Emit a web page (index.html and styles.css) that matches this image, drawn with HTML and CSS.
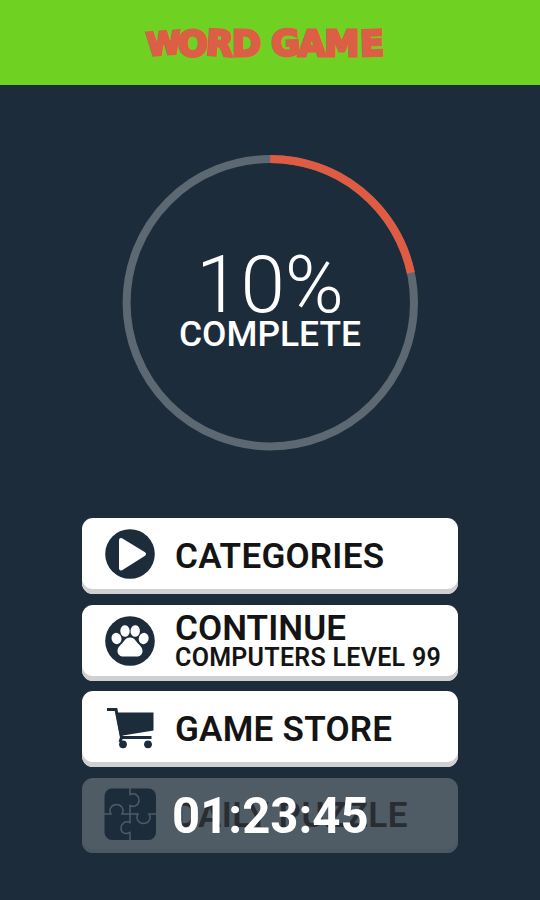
FILE: index.html
```html
<!DOCTYPE html>
<html lang="en">
  <head>
    <meta charset="UTF-8"/>
    <meta name="viewport" content="width=device-width, initial-scale=1.0">
    <link rel="stylesheet" href="styles.css">
    <title>Word Game</title>
  </head>
  <body>
    <header class="header">
      <svg class="logo" viewBox="0 0 250 50" role="img" aria-label="Word Game">
        <text y="39.500 40 38.500 40 40 40 39.500 40 40" x="2.500 33 60.500 87 120 127 153.500 179.500 215.500" rotate="-4 0 4 0 0 -3 0 0 -2"><tspan class="logo_w">W</tspan>ORD GAME</text>
      </svg>
    </header>
    <main class="main">
      <div class="progress">
        <svg class="progress_ring" viewBox="0 0 296 296">
          <circle class="progress_track" cx="148.300" cy="147.700" r="143.700"/>
          <circle class="progress_value" cx="148.300" cy="147.700" r="143.700" pathLength="360" transform="rotate(-90 148.300 147.700)"/>
        </svg>
        <div class="progress_text">
          <p class="progress_percent">10%</p>
          <p class="progress_label">COMPLETE</p>
        </div>
      </div>
      <nav class="menu">
        <button class="menuButton">
          <svg class="icon" viewBox="0 0 52 52">
            <circle cx="26" cy="26" r="24.8"/>
            <path class="icon_light" d="M17 12 L40 26 L17 40.500 Z"/>
          </svg>
          <span class="menuButton_title">CATEGORIES</span>
        </button>
        <button class="menuButton">
          <svg class="icon" viewBox="0 0 52 52">
            <circle cx="26" cy="26" r="24.8"/>
            <g class="icon_paw">
              <ellipse cx="12.500" cy="23.500" rx="4.900" ry="5.700" transform="rotate(-20 12.500 23.500)"/>
              <ellipse cx="21" cy="16" rx="4.700" ry="5.800" transform="rotate(-5 21 16)"/>
              <ellipse cx="31.200" cy="16" rx="4.700" ry="5.800" transform="rotate(5 31.200 16)"/>
              <ellipse cx="39.700" cy="23.500" rx="4.900" ry="5.700" transform="rotate(20 39.700 23.500)"/>
              <path d="M26 22.500c-4 0-5.500 3-7.500 5.500-2.500 2.600-5 4.500-5 8 0 3.500 2.500 5.500 6 5.500h13c3.500 0 6-2 6-5.500 0-3.500-2.500-5.400-5-8-2-2.500-3.500-5.500-7.500-5.500z"/>
            </g>
          </svg>
          <span class="menuButton_text">
            <span class="menuButton_title">CONTINUE</span>
            <span class="menuButton_subtitle">COMPUTERS LEVEL 99</span>
          </span>
        </button>
        <button class="menuButton">
          <svg class="icon" viewBox="0 0 52 52">
            <path class="icon_line" d="M3 8.500H12L17.500 36.500"/>
            <path d="M11.500 11.500H49.500V29.500L16 35z"/>
            <circle cx="19" cy="43.300" r="3.900"/>
            <circle cx="44" cy="43.300" r="3.900"/>
            <path class="icon_line" d="M47.500 36.500H17.500L16 41"/>
          </svg>
          <span class="menuButton_title">GAME STORE</span>
        </button>
        <div class="menuButton menuButton_locked">
          <svg class="icon" viewBox="0 0 52 52">
            <rect x="0.500" y="0.500" width="51.500" height="51.500" rx="7.500"/>
            <path class="icon_seam" d="M26 0V6.500C31 4 35 8 35 12.300S31 20 26 17.500V34.500C21 32 17 36 17 40.200S21 47 26 44.500V52"/>
            <path class="icon_seam" d="M0 26H7C4 21 8 16.500 12.500 16.500S21 21 18 26H34C31 31 35 35.500 39.500 35.500S48 31 45 26H52"/>
          </svg>
          <span class="menuButton_title">DAILY PUZZLE</span>
          <span class="timer">01:23:45</span>
        </div>
      </nav>
    </main>
  </body>
</html>
```
FILE: styles.css
```css
* {
  box-sizing: border-box;
}
body {
  margin: 0;
  height: 900px;
  background-color: #1d2c3b;
  font-family: "Roboto", sans-serif;
  overflow: hidden;
}
p {
  margin: 0;
}

.header {
  height: 84.500px;
  display: flex;
  justify-content: center;
  padding-top: 16px;
  background-color: #6fd223;
}
.logo {
  width: 250px;
  height: 50px;
  overflow: visible;
  font-family: "DejaVu Sans", sans-serif;
  font-weight: 700;
  font-size: 35px;
  fill: #dc5e45;
  stroke: #dc5e45;
  stroke-width: 3px;
}
.logo_w {
  font-size: 31px;
}

.main {
  display: flex;
  flex-direction: column;
  align-items: center;
  padding-top: 70px;
}

.progress {
  display: grid;
  width: 296px;
  height: 296px;
}
.progress_ring,
.progress_text {
  grid-area: 1 / 1;
}
.progress_track,
.progress_value {
  fill: none;
  stroke-width: 8px;
}
.progress_track {
  stroke: #5c6872;
}
.progress_value {
  stroke: #df5c43;
  stroke-dasharray: 78 360;
}
.progress_text {
  color: #fff;
  text-align: center;
  padding-top: 88px;
}
.progress_percent {
  font-size: 80px;
  font-weight: 300;
  line-height: 84px;
}
.progress_label {
  font-size: 35.400px;
  font-weight: 500;
  line-height: 35px;
  margin-top: -10px;
}

.menu {
  display: flex;
  flex-direction: column;
  gap: 10.700px;
  width: 376px;
  margin-top: 67.500px;
}
.menuButton {
  display: flex;
  align-items: center;
  gap: 19px;
  width: 100%;
  height: 76px;
  padding: 0 0 4px 22px;
  border: none;
  border-radius: 11px;
  background-color: #fff;
  box-shadow: inset 0 -5px 0 #d0d0d0;
  color: #141414;
  font-family: inherit;
  text-align: left;
}
.menuButton_text {
  display: flex;
  flex-direction: column;
}
.menuButton_title {
  font-size: 35px;
  font-weight: 600;
  line-height: 36px;
  letter-spacing: 0.250px;
  white-space: nowrap;
}
.menuButton > .menuButton_title {
  padding-top: 5px;
}
.menuButton_text > .menuButton_title {
  margin-top: -2px;
  letter-spacing: 0.100px;
}
.menuButton_subtitle {
  font-size: 25px;
  font-weight: 600;
  line-height: 22px;
  letter-spacing: 0.280px;
  white-space: nowrap;
}

.menuButton_locked {
  position: relative;
  height: 75px;
  background-color: #4f5b65;
  box-shadow: inset 0 -4px 0 #4b5761;
  color: #292c30;
}
.menuButton_locked > .menuButton_title {
  letter-spacing: 0.500px;
}
/* countdown sits on top of the locked title */
.timer {
  position: absolute;
  left: 90px;
  top: 10px;
  color: #fff;
  font-size: 49.100px;
  font-weight: 700;
  line-height: 56px;
}

.icon {
  width: 52px;
  height: 52px;
  flex-shrink: 0;
  fill: #1d2c3b;
}
.icon_light {
  fill: #fff;
  stroke: #fff;
  stroke-width: 4px;
  stroke-linejoin: round;
}
.icon_paw {
  fill: #fff;
}
.icon_line {
  fill: none;
  stroke: #1d2c3b;
  stroke-width: 3px;
}
.icon_seam {
  fill: none;
  stroke: #4f5b65;
  stroke-width: 1.500px;
}
```
